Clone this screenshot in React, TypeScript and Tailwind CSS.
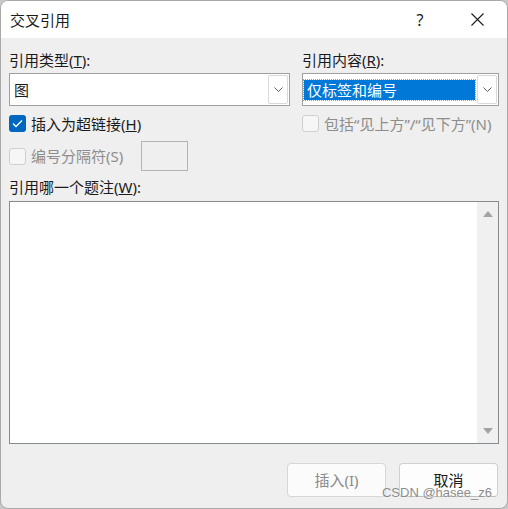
import React from "react";

function Chevron() {
  return (
    <svg width="9" height="5" viewBox="0 0 9 5" fill="none">
      <path d="M0.5 0.5 L4.5 4.5 L8.5 0.5" stroke="#5f5f5f" strokeWidth="1" />
    </svg>
  );
}

function ComboBox({ width, children }: { width: string; children: React.ReactNode }) {
  return (
    <div className={`flex h-[33px] ${width} border border-[#a0a0a0] bg-white`}>
      <div className="flex flex-1 items-center">{children}</div>
      <div className="m-[1px] flex w-[20px] items-center justify-center rounded-[2px] border border-[#d9d9d9] bg-white">
        <Chevron />
      </div>
    </div>
  );
}

function CheckBox({ checked, disabled }: { checked?: boolean; disabled?: boolean }) {
  if (checked) {
    return (
      <div className="flex h-[17px] w-[17px] shrink-0 items-center justify-center rounded-[3px] bg-[#0067c0]">
        <svg width="11" height="9" viewBox="0 0 11 9" fill="none">
          <path d="M1 4.5 L4 7.5 L10 1.5" stroke="white" strokeWidth="1.3" />
        </svg>
      </div>
    );
  }
  return (
    <div
      className={`h-[17px] w-[17px] shrink-0 rounded-[3px] border ${
        disabled ? "border-[#cfcfcf] bg-[#f6f6f6]" : "border-[#8a8a8a] bg-white"
      }`}
    />
  );
}

export default function App() {
  return (
    <div className="h-[509px] w-[508px] bg-[#c8c8c8] font-['Noto_Sans','Noto_Sans_CJK_SC',sans-serif] text-[15px] text-[#1b1b1b]">
      <div className="flex h-[509px] w-[508px] flex-col overflow-hidden rounded-[8px] border border-[#a9a9a9] bg-[#efefef]">
        {/* title bar */}
        <div className="flex h-[37px] shrink-0 items-center bg-white pl-[9px] pr-[7px]">
          <span className="leading-[20px]">交叉引用</span>
          <div className="ml-auto flex w-[46px] items-center justify-center text-[16px] leading-[20px]">?</div>
          <div className="ml-[11px] flex w-[46px] items-center justify-center">
            <svg width="13" height="13" viewBox="0 0 13 13" fill="none">
              <path d="M0.5 0.5 L12.5 12.5 M12.5 0.5 L0.5 12.5" stroke="#1b1b1b" strokeWidth="1.1" />
            </svg>
          </div>
        </div>

        {/* body */}
        <div className="flex flex-1 flex-col px-[8px]">
          <div className="mt-[12px] flex gap-[12px]">
            <div className="flex w-[281px] flex-col">
              <div className="h-[20px] leading-[20px]">
                引用类型(<span className="underline">T</span>):
              </div>
              <div className="mt-[3px]">
                <ComboBox width="w-[281px]">
                  <span className="pl-[4px] leading-[20px]">图</span>
                </ComboBox>
              </div>
              <div className="mt-[9px] flex h-[17px] items-center gap-[5px]">
                <CheckBox checked />
                <span className="leading-[20px]">
                  插入为超链接(<span className="underline">H</span>)
                </span>
              </div>
              <div className="mt-[9px] flex h-[30px] items-center">
                <CheckBox disabled />
                <span className="ml-[5px] leading-[20px] text-[#8d8d8d]">编号分隔符(S)</span>
                <div className="ml-auto mr-[102px] h-[30px] w-[47px] border border-[#b4b4b4] bg-[#efefef]" />
              </div>
            </div>

            <div className="flex w-[197px] flex-col">
              <div className="h-[20px] leading-[20px]">
                引用内容(<span className="underline">R</span>):
              </div>
              <div className="mt-[3px]">
                <ComboBox width="w-[197px]">
                  <div className="ml-[1px] mr-[1px] flex h-[20px] flex-1 items-center bg-[#0078d7] pl-[3px] text-white outline-1 outline-dotted outline-offset-0 outline-[#ff8a00]">
                    <span className="leading-[20px]">仅标签和编号</span>
                  </div>
                </ComboBox>
              </div>
              <div className="mt-[9px] flex h-[17px] items-center gap-[5px]">
                <CheckBox disabled />
                <span className="leading-[20px] text-[#8d8d8d]">包括“见上方”/“见下方”(N)</span>
              </div>
            </div>
          </div>

          <div className="mt-[6px] h-[20px] leading-[20px]">
            引用哪一个题注(<span className="underline">W</span>):
          </div>

          <div className="mt-[4px] flex h-[243px] w-[490px] border border-[#868a8f] bg-white">
            <div className="flex-1" />
            <div className="flex w-[21px] flex-col items-center justify-between bg-[#f0f0f0] py-[9px]">
              <svg width="10" height="6" viewBox="0 0 10 6">
                <polygon points="5,0 10,6 0,6" fill="#a3a3a3" />
              </svg>
              <svg width="10" height="6" viewBox="0 0 10 6">
                <polygon points="0,0 10,0 5,6" fill="#a3a3a3" />
              </svg>
            </div>
          </div>

          <div className="relative mt-[19px] flex justify-end gap-[13px] pr-[1px]">
            <button className="flex h-[34px] w-[99px] items-center justify-center rounded-[4px] border border-[#d6d6d6] bg-[#fbfbfb] leading-[20px] text-[#8a8a8a]">
              插入(I)
            </button>
            <button className="flex h-[34px] w-[99px] items-center justify-center rounded-[4px] border border-[#d0d0d0] border-b-[#bcbcbc] bg-[#fdfdfd] leading-[20px] text-[#1b1b1b]">
              取消
            </button>
            <span className="absolute right-[7px] top-[22px] font-['Liberation_Sans',sans-serif] text-[13px] leading-[16px] text-[#8c8c8c] [text-shadow:0_0_2px_white]">
              CSDN @hasee_z6
            </span>
          </div>
        </div>
      </div>
    </div>
  );
}
